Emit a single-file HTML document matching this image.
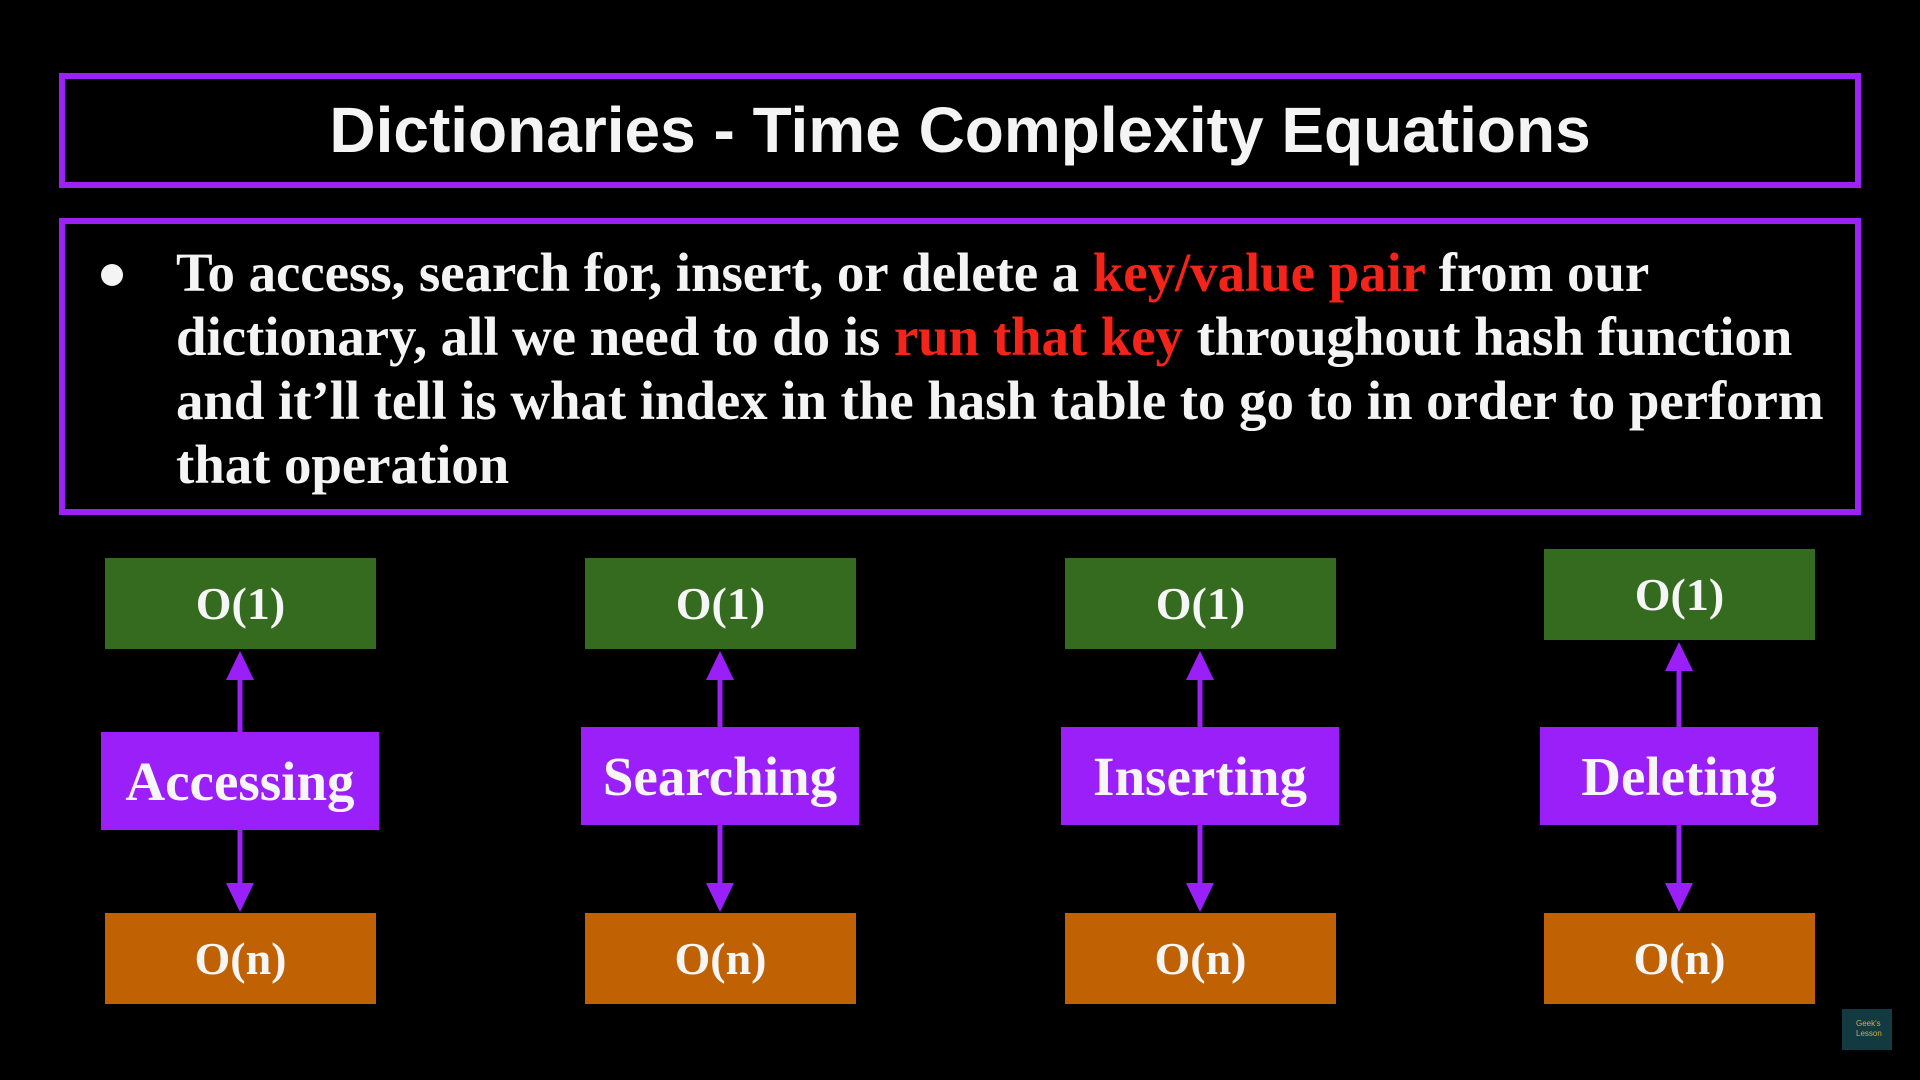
<!DOCTYPE html>
<html><head><meta charset="utf-8"><style>
html,body{margin:0;padding:0;background:#000;width:1920px;height:1080px;overflow:hidden;position:relative;font-family:"Liberation Serif",serif;color:#f4f4f4}
.box{position:absolute;border:6px solid #9b22f5;box-sizing:border-box}
.title{left:59px;top:73px;width:1802px;height:115px;text-align:center}
.title span{display:inline-block;font-family:"Liberation Sans",sans-serif;font-weight:bold;font-size:64px;line-height:103px;white-space:nowrap}
.main{left:59px;top:218px;width:1802px;height:297px}
.bul{position:absolute;left:101px;top:264px;width:22px;height:22px;border-radius:50%;background:#f4f4f4}
.txt{position:absolute;left:176px;top:241px;font-weight:bold;font-size:55px;line-height:64px;white-space:nowrap;letter-spacing:-0.1px}
.r{color:#f5241a}
.b{position:absolute;display:flex;align-items:center;justify-content:center;font-weight:bold;color:#f6f6f6}
.g{background:#346b1f;width:271px;height:91px;font-size:46px}
.o{background:#c06203;width:271px;height:91px;font-size:46px}
.p{background:#9b1ff9;width:278px;height:98px;font-size:55px}
.logo{position:absolute;left:1842px;top:1009px;width:50px;height:41px;background:#123a40;color:#c9b24a;font-size:8px;font-family:"Liberation Sans",sans-serif;line-height:10px;padding:10px 0 0 14px;box-sizing:border-box}
</style></head><body>
<div class="box title"><span>Dictionaries - Time Complexity Equations</span></div>
<div class="box main"></div>
<div class="bul"></div>
<div class="txt">To access, search for, insert, or delete a <span class="r">key/value pair</span> from our<br>dictionary, all we need to do is <span class="r">run that key</span> throughout hash function<br>and it’ll tell is what index in the hash table to go to in order to perform<br>that operation</div>

<div class="b g" style="left:105px;top:558px">O(1)</div>
<div class="b g" style="left:585px;top:558px">O(1)</div>
<div class="b g" style="left:1065px;top:558px">O(1)</div>
<div class="b g" style="left:1544px;top:549px">O(1)</div>

<div class="b p" style="left:101px;top:732px">Accessing</div>
<div class="b p" style="left:581px;top:727px">Searching</div>
<div class="b p" style="left:1061px;top:727px">Inserting</div>
<div class="b p" style="left:1540px;top:727px">Deleting</div>

<div class="b o" style="left:105px;top:913px">O(n)</div>
<div class="b o" style="left:585px;top:913px">O(n)</div>
<div class="b o" style="left:1065px;top:913px">O(n)</div>
<div class="b o" style="left:1544px;top:913px">O(n)</div>

<svg width="1920" height="1080" style="position:absolute;left:0;top:0" fill="#9b1ff9" stroke="#9b1ff9">
<g stroke-width="5">
<line x1="240" y1="732" x2="240" y2="675"/><line x1="240" y1="830" x2="240" y2="885"/>
<line x1="720" y1="727" x2="720" y2="675"/><line x1="720" y1="825" x2="720" y2="885"/>
<line x1="1200" y1="727" x2="1200" y2="675"/><line x1="1200" y1="825" x2="1200" y2="885"/>
<line x1="1679" y1="727" x2="1679" y2="666"/><line x1="1679" y1="825" x2="1679" y2="885"/>
</g>
<g stroke="none">
<polygon points="240,651 226,680 254,680"/><polygon points="240,912 226,883 254,883"/>
<polygon points="720,651 706,680 734,680"/><polygon points="720,912 706,883 734,883"/>
<polygon points="1200,651 1186,680 1214,680"/><polygon points="1200,912 1186,883 1214,883"/>
<polygon points="1679,642 1665,671 1693,671"/><polygon points="1679,912 1665,883 1693,883"/>
</g>
</svg>
<div class="logo">Geek's<br>Lesson</div>
</body></html>
